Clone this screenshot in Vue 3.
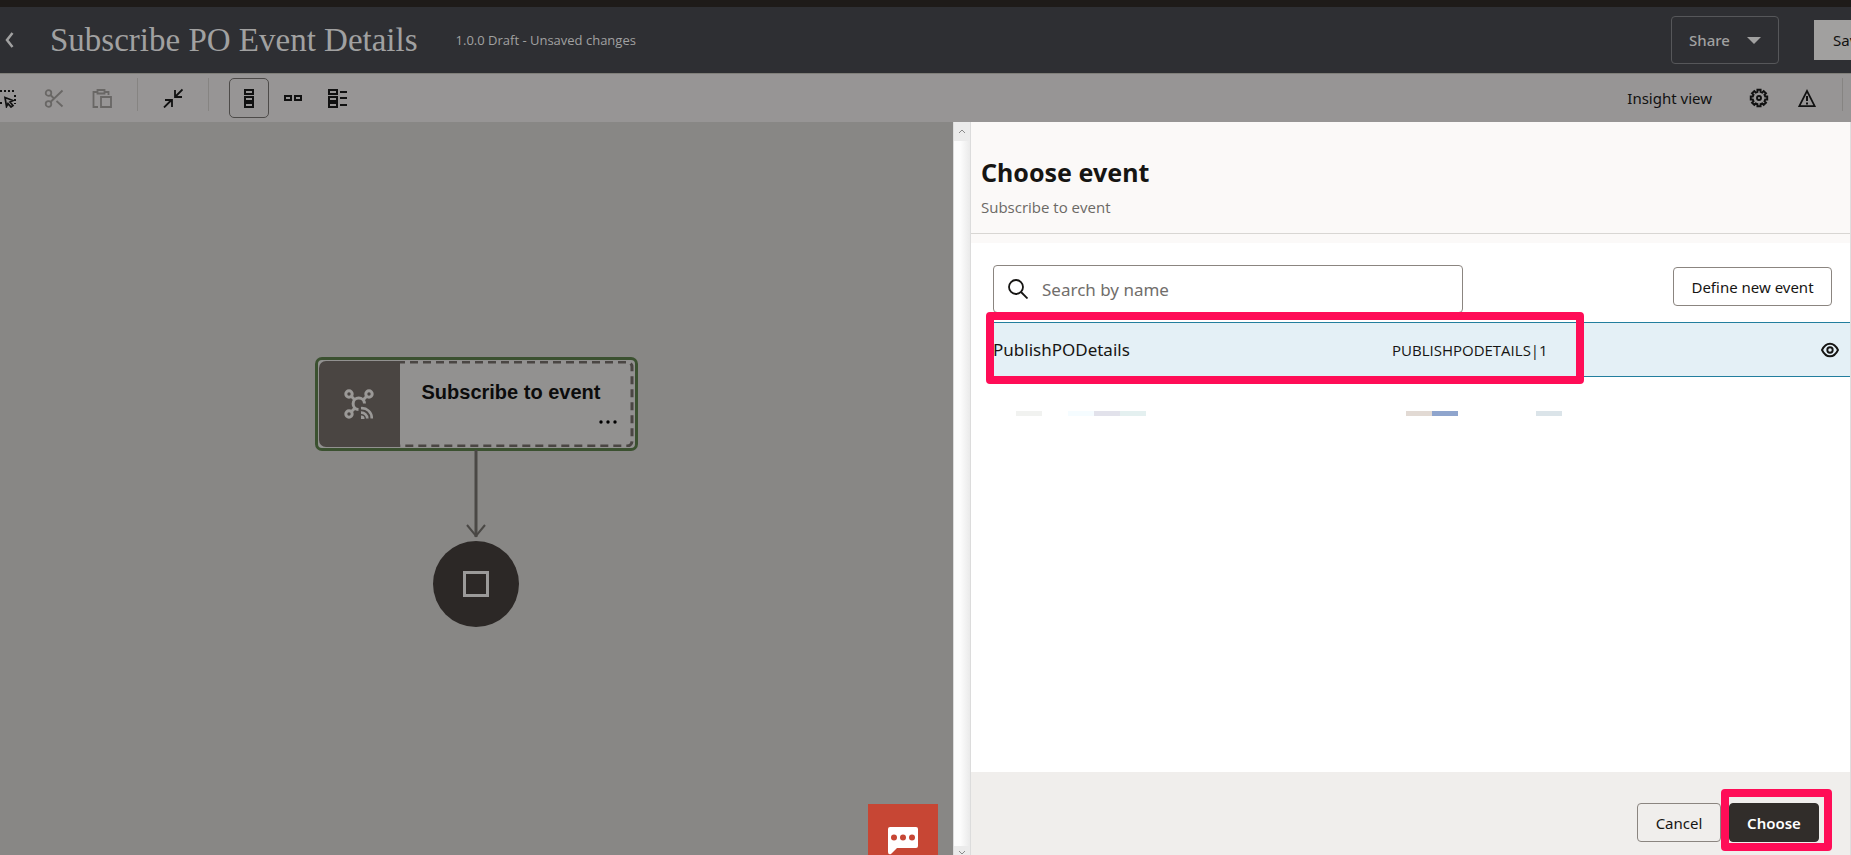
<script setup>
import { ref } from 'vue'

const query = ref('')
const events = [{ name: 'PublishPODetails', code: 'PUBLISHPODETAILS|1' }]

// Outline of a cog with eight teeth, centred on the origin
const polar = (r, deg) => {
  const a = (deg * Math.PI) / 180
  return `${(r * Math.cos(a)).toFixed(2)} ${(r * Math.sin(a)).toFixed(2)}`
}
const gear =
  'M' +
  Array.from({ length: 8 }, (_, i) => {
    const t = i * 45
    return [polar(6.4, t - 14), polar(8.4, t - 11), polar(8.4, t + 11), polar(6.4, t + 14)].join('L')
  }).join('L') +
  'z'
</script>

<template>
  <div class="page">
    <header class="topbar">
      <button class="back" aria-label="Back">
        <svg width="10" height="16" viewBox="0 0 10 16"><path d="M8.500 1 3 8l5.500 7" /></svg>
      </button>
      <h1>Subscribe PO Event Details</h1>
      <span class="version">1.0.0 Draft - Unsaved changes</span>
      <div class="top-actions">
        <button class="share">
          Share
          <svg width="14" height="7" viewBox="0 0 14 7"><path d="M0 0h14L7 7z" /></svg>
        </button>
        <button class="save">Save</button>
      </div>
    </header>

    <nav class="toolbar" aria-label="Canvas tools">
      <div class="tools">
        <button class="tool" aria-label="Select">
          <svg width="20" height="20" viewBox="0 0 20 20">
            <path d="M0 3h20M19 7v9M0 15h7" fill="none" stroke="#111" stroke-width="2" stroke-dasharray="2 2" />
            <path d="M9 9.500l8 3-3 1.500 3 3.500-2 1.500-3-3.500-1.500 3z" fill="none" stroke="#111" stroke-width="1.700" />
          </svg>
        </button>
        <button class="tool dim" aria-label="Cut">
          <svg width="20" height="20" viewBox="0 0 20 20" fill="none" stroke="#696765" stroke-width="1.800">
            <circle cx="4.500" cy="5" r="2.800" /><circle cx="4.500" cy="16" r="2.800" />
            <path d="M6.500 14 18.500 2.500M6.500 7l3.500 3.500M12.500 13l6 5.500" />
          </svg>
        </button>
        <button class="tool dim" aria-label="Paste">
          <svg width="20" height="20" viewBox="0 0 20 20" fill="none" stroke="#696765" stroke-width="1.800">
            <path d="M5 4H1.500v15H6M5.500 2h7v3.500h-7zM13 4h3.500v3" /><path d="M9 9h10v10H9z" />
          </svg>
        </button>
        <i class="divider"></i>
        <button class="tool" aria-label="Collapse">
          <svg width="20" height="20" viewBox="0 0 20 20" fill="none" stroke="#111" stroke-width="1.800">
            <path d="M19.500 1.500 12.500 8.500M12 2v7h7M1 19.500l7-7M2 12h7v7" />
          </svg>
        </button>
        <i class="divider wide"></i>
        <button class="tool active" aria-label="Vertical layout">
          <svg width="20" height="20" viewBox="0 0 20 20" fill="none" stroke="#111" stroke-width="2">
            <path d="M6 2h8v4H6zM6 9h8v4H6zM6 15h8v4H6z" />
          </svg>
        </button>
        <button class="tool" aria-label="Horizontal layout">
          <svg width="20" height="20" viewBox="0 0 20 20" fill="none" stroke="#111" stroke-width="2">
            <path d="M2 8h6v4H2zM12 8h6v4h-6z" />
          </svg>
        </button>
        <button class="tool" aria-label="List layout">
          <svg width="20" height="20" viewBox="0 0 20 20" fill="none" stroke="#111" stroke-width="2">
            <path d="M2 2h8v4H2zM2 9h8v4H2zM2 15h8v4H2zM13 4h7M13 10h7M13 17h7" />
          </svg>
        </button>
      </div>
      <div class="tools right">
        <button class="insight">Insight view</button>
        <button class="tool" aria-label="Settings">
          <svg width="20" height="20" viewBox="-10 -10 20 20" fill="none" stroke="#111" stroke-width="1.900">
            <path :d="gear" /><circle r="2" />
          </svg>
        </button>
        <button class="tool" aria-label="Warnings">
          <svg width="20" height="20" viewBox="0 0 20 20" fill="none" stroke="#111" stroke-width="1.700">
            <path d="M10 3 2.300 18.200h15.400z" /><path d="M10 8v5M10 14.500v2" stroke-width="2" />
          </svg>
        </button>
        <i class="divider"></i>
      </div>
    </nav>

    <main class="workspace">
      <section class="canvas" aria-label="Flow canvas">
        <div class="node">
          <div class="node-icon">
            <svg width="30" height="30" viewBox="0 0 30 30" fill="none" stroke="#9b9997" stroke-width="3">
              <circle cx="5" cy="5" r="3.200" /><circle cx="25" cy="5" r="3.200" /><circle cx="5" cy="25" r="3.200" />
              <path d="M7 7l4 4M23 7l-4 4M7 23l4-4" />
              <path d="M20.500 14.500a5.700 5.700 0 1 0-6 6" />
              <path d="M17 19.200a10 10 0 0 1 10.800 10.300M17 23.600a6 6 0 0 1 6.300 5.900" stroke-width="2.600" />
              <path d="M17 30v-3.500a3 3 0 0 1 3.500 3.500z" fill="#9b9997" stroke="none" />
            </svg>
          </div>
          <div class="node-body">
            <svg class="dashes" width="100%" height="100%" aria-hidden="true">
              <rect x="-8" y="1" width="240" height="84" rx="5" />
            </svg>
            <strong>Subscribe to event</strong>
            <button class="more" aria-label="More actions">
              <svg width="18" height="4" viewBox="0 0 18 4"><circle cx="2" cy="2" r="1.700" /><circle cx="9" cy="2" r="1.700" /><circle cx="16" cy="2" r="1.700" /></svg>
            </button>
          </div>
        </div>
        <svg class="link" width="20" height="88" viewBox="0 0 20 88" fill="none" stroke="#4a4845">
          <path d="M10 0v87" stroke-width="3" /><path d="M1 75l9 11 9-11" stroke-width="2" />
        </svg>
        <div class="stop"><i></i></div>
        <button class="chat" aria-label="Chat">
          <svg width="30" height="28" viewBox="0 0 30 28">
            <path d="M2 0h26q2 0 2 2v17q0 2-2 2H9l-6 6q-3 1-3-2V2q0-2 2-2z" fill="#fff" />
            <g fill="#c74634"><circle cx="6" cy="10.500" r="3" /><circle cx="15" cy="10.500" r="3" /><circle cx="24" cy="10.500" r="3" /></g>
          </svg>
        </button>
      </section>

      <div class="scroll" aria-hidden="true">
        <span><svg width="8" height="5" viewBox="0 0 8 5"><path d="M1 4l3-3 3 3" /></svg></span>
        <span><svg width="8" height="5" viewBox="0 0 8 5"><path d="M1 1l3 3 3-3" /></svg></span>
      </div>

      <section class="drawer">
        <header class="drawer-head">
          <h2>Choose event</h2>
          <p>Subscribe to event</p>
        </header>
        <div class="drawer-body">
          <div class="search-row">
            <label class="search">
              <svg width="20" height="20" viewBox="0 0 20 20" fill="none" stroke="#161513" stroke-width="1.800"><circle cx="8" cy="8" r="7" /><path d="M13 13l6.500 6.500" /></svg>
              <input v-model="query" type="text" placeholder="Search by name" aria-label="Search by name" />
            </label>
            <button class="btn define">Define new event</button>
          </div>
          <div class="results">
            <div v-for="e in events" :key="e.code" class="row">
              <span class="name">{{ e.name }}</span>
              <span class="code">{{ e.code }}</span>
              <button class="eye" aria-label="View event">
                <svg width="18" height="16" viewBox="0 0 18 16" fill="none" stroke="#161513" stroke-width="1.900"><path d="M1 8q3-6.300 8-6.300T17 8q-3 6.300-8 6.300T1 8z" /><circle cx="9" cy="8" r="2.700" /></svg>
              </button>
            </div>
            <div class="mark mark-row"></div>
          </div>
          <div class="bits" aria-hidden="true">
            <i class="b1"></i><i></i><i class="b2"></i><i class="b3"></i><i class="b4"></i>
            <i class="gap"></i><i class="b5"></i><i class="b6"></i><i class="gap-s"></i><i class="b7"></i>
          </div>
        </div>
        <footer class="drawer-foot">
          <button class="btn cancel">Cancel</button>
          <div class="choose-wrap">
            <button class="btn choose">Choose</button>
            <div class="mark mark-choose"></div>
          </div>
        </footer>
      </section>
    </main>
  </div>
</template>

<style>
body { overflow: hidden; }
</style>

<style scoped>
.page {
  display: flex;
  flex-direction: column;
  min-height: 100vh;
  overflow: hidden;
  font-family: "Noto Sans", "Open Sans", sans-serif;
  font-size: 15px;
  color: #161513;
  background: #888785;
}
.page *, .page *::before { box-sizing: border-box; }
button { margin: 0; padding: 0; border: 0; background: none; font: inherit; color: inherit; }
svg { display: block; flex: none; }

.topbar {
  display: flex;
  align-items: center;
  height: 73px;
  border-top: 7px solid #1e1b19;
  background: #2e2f33;
  color: #a1a1a1;
}
.back { width: 20px; height: 36px; padding-left: 4px; }
.back svg { fill: none; stroke: #a1a1a1; stroke-width: 2.5; }
h1 { margin: 0 0 0 30px; font: 400 33px/40px "Liberation Serif", serif; white-space: nowrap; }
.version { margin-left: 38px; font: 13px "Open Sans", sans-serif; }
.top-actions { display: flex; align-items: center; gap: 35px; margin: 0 -59px 0 auto; }
.share {
  display: flex;
  align-items: center;
  justify-content: space-between;
  width: 108px;
  height: 48px;
  padding: 0 17px;
  border: 1px solid #56575a;
  border-radius: 4px;
  font-weight: 500;
}
.share svg { fill: #a1a1a1; }
.save { width: 96px; height: 40px; padding-left: 19px; background: #a1a09f; color: #111; text-align: left; }

.toolbar {
  display: flex;
  justify-content: space-between;
  height: 49px;
  padding-top: 4px;
  border-top: 1px solid #807f7a;
  background: #979595;
}
.tools { display: flex; align-items: flex-start; gap: 8px; margin-left: -14px; }
.tool { display: grid; place-items: center; width: 40px; height: 40px; border-radius: 5px; }
.active { border: 1px solid #4d4b49; }
.active + .tool, .active + .tool + .tool { margin-left: -4px; }
.divider { width: 1px; height: 33px; margin: 0 7px; background: #868482; }
.wide { margin-right: 12px; }
.insight { height: 40px; margin-right: 19px; color: #111; }
.right .divider { margin: 0 8px 0 7px; }

.workspace { flex: 1; display: grid; grid-template-columns: 953fr 18px 880fr; }
.canvas {
  position: relative;
  display: flex;
  flex-direction: column;
  align-items: center;
  padding: 235px 1px 0 0;
}
.node {
  display: flex;
  width: 323px;
  height: 94px;
  padding: 1px;
  border: 3px solid #3b5130;
  border-radius: 7px;
  background: #929190;
}
.node-icon {
  display: grid;
  place-items: center;
  width: 81px;
  border-radius: 7px 0 0 7px;
  background: #4a4542;
}
.node-body { position: relative; flex: 1; padding: 19px 0 0 22px; }
.dashes { position: absolute; inset: 0; overflow: hidden; }
.dashes rect { fill: none; stroke: #4a4643; stroke-width: 3; stroke-dasharray: 8 5; }
.node-body strong { display: block; font: 700 20px/24px "Liberation Sans", sans-serif; color: #0c0c0c; white-space: nowrap; }
.more { display: block; margin: 16px 17px 0 auto; }
.link { margin-top: -1px; }
.stop {
  display: grid;
  place-items: center;
  width: 86px;
  height: 86px;
  margin-top: 3px;
  border-radius: 50%;
  background: #2c2826;
}
.stop i { width: 26px; height: 26px; border: 3px solid #9b9a99; }
.chat {
  position: absolute;
  right: 15px;
  bottom: 0;
  width: 70px;
  height: 51px;
  padding: 22px 20px 0;
  background: #c74634;
}

.scroll {
  display: flex;
  flex-direction: column;
  justify-content: space-between;
  border: solid #dcdcdc;
  border-width: 0 1px;
  background: linear-gradient(90deg, #fcfcfc 40%, #eaeaea);
}
.scroll span { display: grid; place-items: center; height: 19px; background: #ebebeb; }
.scroll span:last-child { height: 9px; align-items: end; }
.scroll path { fill: none; stroke: #8a8a8a; }

.drawer { display: flex; flex-direction: column; min-width: 0; border-right: 1px solid #dedede; background: #fff; }
.drawer-head { height: 121px; padding: 33px 10px 0; background: linear-gradient(#d8d6d3, #d8d6d3) 0 111px / 100% 1px no-repeat #fbf9f8; }
h2 { margin: 0; font-size: 25px; line-height: 34px; }
.drawer-head p { margin: 8px 0 0; font-family: "Open Sans", sans-serif; color: #6b6966; line-height: 20px; }
.drawer-body { flex: 1; padding-top: 22px; }
.search-row { display: flex; justify-content: space-between; align-items: flex-start; padding: 0 18px 0 22px; }
.search {
  display: flex;
  align-items: center;
  gap: 14px;
  flex: 0 1 470px;
  height: 48px;
  padding: 0 14px;
  border: 1px solid #8b8580;
  border-radius: 4px;
}
.search input { flex: 1; min-width: 0; padding: 0; border: 0; outline: 0; background: none; font: inherit; font-size: 17px; }
.search input::placeholder { color: #716e6b; opacity: 1; }
.btn { height: 39px; border: 1px solid #8b8580; border-radius: 4px; white-space: nowrap; }
.define { width: 159px; margin-top: 2px; }
.results { position: relative; margin: 9px 0 0 22px; }
.row {
  display: flex;
  align-items: center;
  height: 55px;
  padding-right: 11px;
  border: solid #227e9e;
  border-width: 1px 0;
  background: #e4f0f6;
}
.name { width: 399px; font-size: 17px; }
.code { font-family: "Open Sans", sans-serif; }
.eye { margin-left: auto; }
.mark { position: absolute; border: 8px solid #ff0d57; border-radius: 4px; pointer-events: none; }
.mark-row { left: -7px; top: -10px; width: 598px; height: 72px; }
.bits { display: flex; height: 5px; margin: 34px 0 0 19px; }
.bits i { width: 26px; }
.b1 { margin-left: 26px; background: #f1f2f0; }
.b2 { background: #f5fcff; }
.b3 { background: #e2e2eb; }
.b4 { background: #e4f0f0; }
.bits .gap { width: 260px; }
.b5 { background: #e2dad4; }
.b6 { background: #8fa5cd; }
.bits .gap-s { width: 78px; }
.b7 { background: #dbe4e9; }
.drawer-foot { display: flex; justify-content: flex-end; gap: 8px; height: 83px; padding: 31px 31px 0 0; background: #f0eeec; }
.cancel { width: 84px; }
.choose-wrap { position: relative; }
.choose { width: 90px; border-color: #312d2a; background: #312d2a; color: #fff; font-weight: 600; }
.mark-choose { left: -8px; top: -14px; width: 111px; height: 62px; }
</style>
